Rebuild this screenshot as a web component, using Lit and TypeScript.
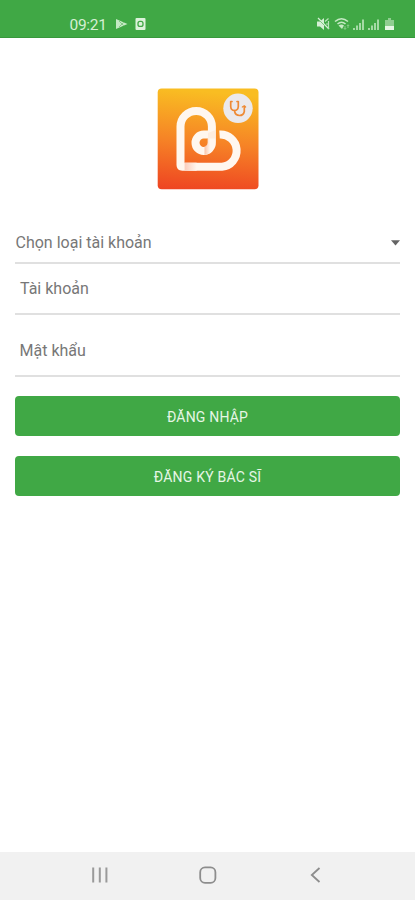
import { LitElement, html, css, svg } from "lit";
import { customElement } from "lit/decorators.js";

const signal = svg`
  <path d="M1 12V10M4 12V7.5M7 12V5M10 12V1.5" stroke="#b0dfb0" stroke-width="1.8" fill="none"/>`;

@customElement("app-root")
export class AppRoot extends LitElement {
  static styles = css`
    :host { display: flex; flex-direction: column; height: 900px; width: 100%; background: #fff;
      font-family: Roboto, "Noto Sans", sans-serif; color: #777; overflow: hidden; }
    * { box-sizing: border-box; }
    svg { display: block; flex: none; }
    .status { height: 38px; flex: none; background: #40a845; color: #d5efd4; display: flex;
      align-items: center; padding: 11px 17px 0 69.5px; border-bottom: 1px solid #38983c; }
    .time { font-size: 15.5px; line-height: 18px; width: 45px; letter-spacing: -0.3px; padding-top: 1px; }
    .spacer { flex: 1; }
    main { flex: 1; padding: 50px 15px 0; }
    .logo { margin: 0 0 0 142px; }
    .field { border-bottom: 2px solid #e0e0e0; display: flex; align-items: center; font-size: 16px;
      line-height: 20px; }
    .select { height: 40px; margin-top: 34px; justify-content: space-between; padding-left: 0.5px; }
    .account { height: 51px; padding: 1px 5px 0; }
    .password { height: 62px; padding: 12px 5px 0 4.5px; }
    .btn { display: flex; align-items: center; justify-content: center; width: 100%; height: 40px;
      margin-top: 20px; padding: 2px 0 0; border: 0; border-radius: 4px; background: #40a845; color: #e6f6e5;
      font: 14px Roboto, "Noto Sans", sans-serif; letter-spacing: 0.2px; }
    .password + .btn { margin-top: 19px; }
    .nav { height: 48px; flex: none; background: #f1f1f1; display: flex; align-items: center;
      justify-content: space-between; padding: 0 90px 2px 91px; }
  `;

  render() {
    return html`
      <div class="status">
        <span class="time">09:21</span>
        <svg width="34" height="14" viewBox="0 0 34 14">
          <path d="M1 2L12.5 7L1 12Z" fill="#c5e9c4"/>
          <path d="M4 4L9 9M4 10L9 5" stroke="#86ca87" stroke-width="1"/>
          <rect x="20.5" y="1" width="10" height="12" rx="1" fill="#dcf2db"/>
          <rect x="23" y="4.4" width="5" height="5" rx="2" fill="none" stroke="#40a845" stroke-width="1.3"/>
        </svg>
        <span class="spacer"></span>
        <svg width="83" height="14" viewBox="0 0 83 14">
          <path d="M2 4.5H5L9 1V13L5 9.5H2Z" fill="#d5efd4"/>
          <path d="M2 1L14 13" stroke="#40a845" stroke-width="1"/>
          <path d="M3 1L14 12" stroke="#d5efd4" stroke-width="1.3"/>
          <path d="M10 4.5L13.5 1.5M11 7H14M13.5 4V12" stroke="#b9e3b9" stroke-width="1.2" fill="none"/>
          <path d="M20 4.5Q26.5 -1 33 4.5M22.5 7Q26.5 3.5 30.5 7" stroke="#c5e9c4" stroke-width="1.6" fill="none"/>
          <path d="M23.5 8.5Q26.5 6.5 29 8.5L27 12Z" fill="#c5e9c4"/>
          <path d="M30 9V12M28.8 11L30 12.5L31.2 11M33 11V8M31.9 9L33 7.7L34.2 9" stroke="#8fce90" stroke-width="0.9" fill="none"/>
          <g transform="translate(38 1)">${signal}</g>
          <g transform="translate(53 1)">${signal}</g>
          <path d="M73 1H76V3H79V9H70V3H73Z" fill="#8fce90"/>
          <path d="M70 9H79V13H70Z" fill="#e6f6e5"/>
        </svg>
      </div>
      <main>
        <svg class="logo" width="102" height="102" viewBox="0 0 102 102">
          <defs>
            <linearGradient id="bg" x1="0.08" y1="0" x2="0" y2="1">
              <stop offset="0" stop-color="#f9bd22"/>
              <stop offset="0.5" stop-color="#f68326"/>
              <stop offset="1" stop-color="#ee4322"/>
            </linearGradient>
            <linearGradient id="fold" x1="0" x2="1">
              <stop offset="0" stop-color="#fbcdbb"/>
              <stop offset="1" stop-color="#fff6ee"/>
            </linearGradient>
            <linearGradient id="curl" x1="0" x2="1">
              <stop offset="0" stop-color="#f9b795"/>
              <stop offset="1" stop-color="#fff6ee"/>
            </linearGradient>
          </defs>
          <rect x="0.7" y="0.5" width="100.8" height="100.8" rx="4" fill="url(#bg)"/>
          <g fill="none" stroke="#fff7ef" stroke-width="8">
            <path d="M62.5 46.6A16.1 16.1 0 0 1 65 78.7H25.3Q23.5 78.7 23.5 77V38.6A15.7 15.7 0 0 1 54.9 38.6V54.5A8.2 8.2 0 1 1 46.7 46.6H58.9"/>
          </g>
          <rect x="27.6" y="74.7" width="12" height="8" fill="url(#fold)"/>
          <path d="M50.6 50.6V54.5Q50.6 57.5 47.5 58.2V66.7Q51 66.5 53 65V51Z" fill="url(#curl)" opacity="0.8"/>
          <path d="M51 45L58.9 42V50.6H51Z" fill="#fde3d0" opacity="0.5"/>
          <circle cx="81" cy="20.3" r="14.7" fill="#ebe9ec"/>
          <g fill="none" stroke="#ee8a35" stroke-width="1.7" stroke-linecap="round" stroke-linejoin="round">
            <path d="M75 13.5H73.7V18.5Q74 22.5 77.5 22.5T81.3 18.5V13.5H80"/>
            <path d="M77.7 22.5V23.8Q78.5 27.5 82.5 27.5T87.3 23.5V18.5"/>
            <path d="M85.3 19L87.3 17.8L88.6 19" stroke-width="1.3"/>
          </g>
        </svg>
        <div class="field select">
          <span>Chọn loại tài khoản</span>
          <svg width="9" height="6" viewBox="0 0 9 6"><path d="M0 0.3H9L4.5 5.5Z" fill="#646464"/></svg>
        </div>
        <div class="field account">Tài khoản</div>
        <div class="field password">Mật khẩu</div>
        <button class="btn">ĐĂNG NHẬP</button>
        <button class="btn">ĐĂNG KÝ BÁC SĨ</button>
      </main>
      <div class="nav">
        <svg width="18" height="18" viewBox="0 0 18 18">
          <path d="M2.2 1.5V16.5M8.8 1.5V16.5M15.4 1.5V16.5" stroke="#9a9a9a" stroke-width="2"/>
        </svg>
        <svg width="18" height="18" viewBox="0 0 18 18">
          <rect x="1.2" y="1.4" width="15.2" height="15.4" rx="4.8" fill="none" stroke="#8d8d8d" stroke-width="1.8"/>
        </svg>
        <svg width="18" height="18" viewBox="0 0 18 18">
          <path d="M12.5 2L4.8 9L12.5 16" fill="none" stroke="#8d8d8d" stroke-width="1.8"/>
        </svg>
      </div>
    `;
  }
}
